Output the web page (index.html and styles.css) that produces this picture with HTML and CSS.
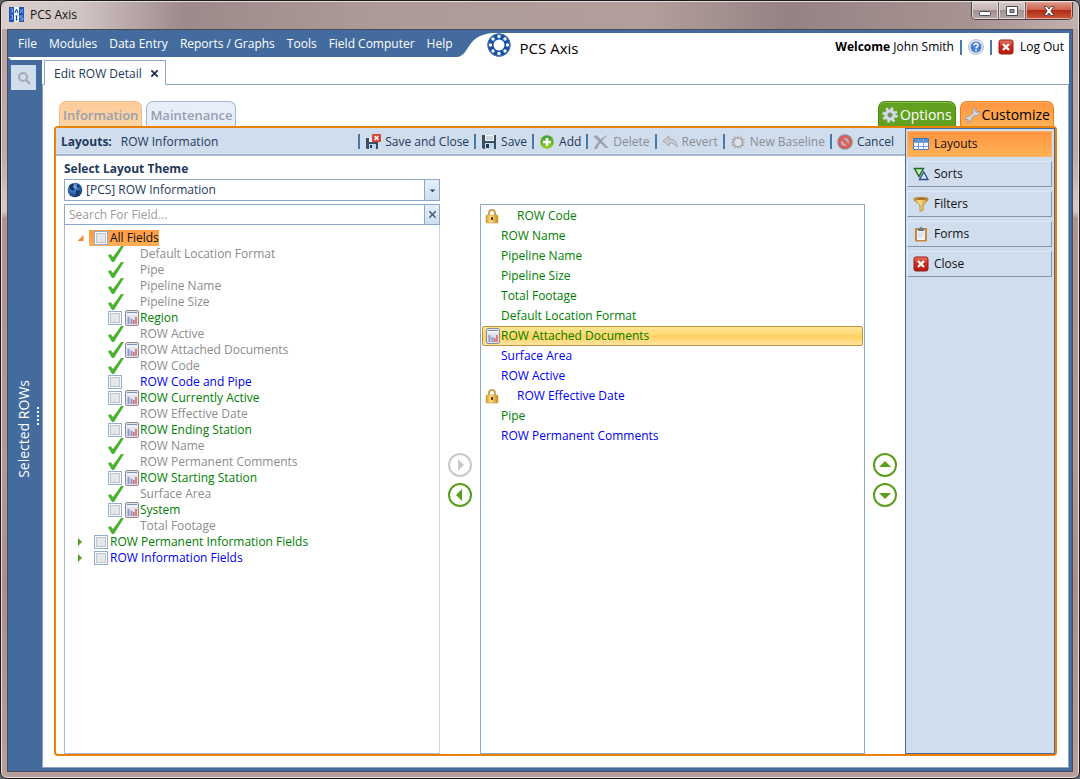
FILE: index.html
```html
<!DOCTYPE html>
<html lang="en">
<head>
<meta charset="utf-8">
<title>PCS Axis</title>
<link rel="stylesheet" href="styles.css">
</head>
<body>
<svg class="sprite" aria-hidden="true">
  <defs>
    <linearGradient id="g-red" x1="0" y1="0" x2="0" y2="1"><stop offset="0" stop-color="#ee7766"/><stop offset=".5" stop-color="#cc2418"/><stop offset="1" stop-color="#b81a10"/></linearGradient>
    <linearGradient id="g-gold" x1="0" y1="0" x2="1" y2="0"><stop offset="0" stop-color="#d99a28"/><stop offset=".4" stop-color="#fbe08a"/><stop offset="1" stop-color="#c98a1c"/></linearGradient>
    <radialGradient id="g-globe" cx=".4" cy=".3" r=".7"><stop offset="0" stop-color="#8db8ea"/><stop offset=".5" stop-color="#3470bc"/><stop offset="1" stop-color="#17386e"/></radialGradient>
    <linearGradient id="g-green" x1="0" y1="0" x2="0" y2="1"><stop offset="0" stop-color="#3f9c36"/><stop offset="1" stop-color="#8fd01f"/></linearGradient>
  </defs>
  <symbol id="calc" viewBox="0 0 14 16"><rect x=".5" y=".5" width="13" height="15" rx="1.5" fill="#e4e3ea" stroke="#8c8c9c"/><rect x="2" y="2" width="10" height="3" fill="#eef5fa"/><path d="M2 2.500h10" stroke="#7c90a9"/><path d="M3.500 7v7M6.500 9v5" stroke="#8b98c8" stroke-width="2"/><path d="M8.800 10v4M11 7v7" stroke="#d96868" stroke-width="1.600"/></symbol>
  <symbol id="lock" viewBox="0 0 14 16"><path d="M4 8V5a3 3 0 0 1 6 0v3" fill="none" stroke="#c9a45a" stroke-width="2"/><rect x="1" y="7" width="12" height="8" rx="1" fill="url(#g-gold)" stroke="#c79a48" stroke-width=".6"/><path d="M7 9v3" stroke="#5c3d08" stroke-width="2"/></symbol>
  <symbol id="redx" viewBox="0 0 16 16"><rect x="1" y="1" width="14" height="14" rx="2" fill="url(#g-red)" stroke="#8e2018"/><path d="M5 5l6 6M11 5l-6 6" stroke="#fff" stroke-width="2.400"/></symbol>
  <symbol id="floppy" viewBox="0 0 16 16"><path d="M1 1h14v14H2.500L1 13.500z" fill="#3d4d60"/><path d="M4 1h9v6H4z" fill="#f3f7fa"/><path d="M5 3h7M5 5h7" stroke="#a7b3c0"/><path d="M4 9h9v6H4z" fill="#b9daf0"/><path d="M5 10h3v4H5z" fill="#2b3b4d"/></symbol>
</svg>

<div class="window">
  <header class="titlebar">
    <svg class="app-icon" viewBox="0 0 15 15"><path fill="#1f56b5" d="M0 0h5v15H0zM10 0h5v15h-5z"/><path fill="#f4f8ff" d="M5 0h5v15H5z"/><path fill="none" stroke="#7fa8e4" d="M1.500 2h2v3h-2M1.500 8h2v4h-2M11 2l3 4M14 2l-3 4M14 9h-3v2h3v2h-3"/><path fill="none" stroke="#173f86" d="M6 6l1.500-4L9 6M7.500 9v4M6.500 9h2M6.500 13h2"/></svg>
    <span class="title">PCS Axis</span>
    <div class="win-buttons">
      <button class="win-btn" aria-label="Minimize"><svg viewBox="0 0 14 12"><rect x="1.500" y="6.500" width="11" height="4" rx="1" fill="#fff" stroke="#4a4c58"/></svg></button>
      <button class="win-btn" aria-label="Maximize"><svg viewBox="0 0 14 12"><path d="M1.500 1.500h11v9h-11zM5 4.500h4v3H5z" fill="#fff" fill-rule="evenodd" stroke="#4a4c58"/></svg></button>
      <button class="win-btn close" aria-label="Close window"><svg viewBox="0 0 14 12"><path d="M2 1.500h3l2 2.500 2-2.500h3L8.800 6l3.200 4.500H9L7 8l-2 2.500H2L5.200 6z" fill="#fff" stroke="#57404a" stroke-width=".9"/></svg></button>
    </div>
  </header>

  <div class="client">
    <div class="header">
      <nav class="menu">
        <a href="#">File</a><a href="#">Modules</a><a href="#">Data Entry</a><a href="#">Reports / Graphs</a><a href="#">Tools</a><a href="#">Field Computer</a><a href="#">Help</a>
      </nav>
      <svg class="swoosh" viewBox="0 0 40 24" preserveAspectRatio="none"><path d="M0 24C12 21 8 3 34 0H40V24z" fill="#fff"/></svg>
      <div class="brandbar">
        <svg class="brand-logo" viewBox="0 0 24 24"><circle cx="12" cy="12" r="8.500" fill="none" stroke="#1452a8" stroke-width="6"/><circle cx="12" cy="12" r="11.200" fill="none" stroke="#56779f"/><g fill="#fff"><circle cx="12" cy="3.500" r="1.700"/><circle cx="18" cy="6" r="1.700"/><circle cx="20.500" cy="12" r="1.700"/><circle cx="18" cy="18" r="1.700"/><circle cx="12" cy="20.500" r="1.700"/><circle cx="6" cy="18" r="1.700"/><circle cx="3.500" cy="12" r="1.700"/><circle cx="6" cy="6" r="1.700"/></g></svg>
        <span class="brand">PCS Axis</span>
        <div class="user">
          <span><b>Welcome</b> John Smith</span>
          <i class="sep"></i>
          <button class="plain" aria-label="Help"><svg class="i16" viewBox="0 0 16 16"><circle cx="8" cy="8" r="7.500" fill="#dfe3ec" stroke="#b9bec9"/><circle cx="8" cy="8" r="5.500" fill="#4a7fd4"/><path d="M6 6.500c0-2.600 4-2.600 4 0C10 8 8 7.800 8 9.500M8 10.600v1.600" fill="none" stroke="#fff" stroke-width="1.500"/></svg></button>
          <i class="sep"></i>
          <button class="plain"><svg class="i16"><use href="#redx"/></svg>Log Out</button>
        </div>
      </div>
    </div>

    <div class="main">
      <aside class="rail">
        <button class="rail-search" aria-label="Search"><svg viewBox="0 0 14 14"><circle cx="6" cy="6" r="4" fill="none" stroke="#a3a9b1" stroke-width="2"/><path d="M9 9l4 4" stroke="#a3a9b1" stroke-width="2.400"/></svg></button>
        <div class="rail-label"><span>Selected ROWs</span><i class="grip"></i></div>
      </aside>

      <div class="workspace">
        <div class="doctabs"><div class="doctab">Edit ROW Detail<button class="plain" aria-label="Close tab"><svg viewBox="0 0 10 10"><path d="M1.500 1.500l7 7M8.500 1.500l-7 7" stroke="#1f3354" stroke-width="2"/></svg></button></div></div>
        <div class="page">
          <div class="tabs">
            <button class="tab info">Information</button>
            <button class="tab maint">Maintenance</button>
            <button class="tab options"><svg class="i16" viewBox="0 0 16 16"><circle cx="8" cy="8" r="6.300" fill="none" stroke="#d3dbe8" stroke-width="3" stroke-dasharray="2.480 2.470"/><circle cx="8" cy="8" r="4" fill="none" stroke="#d3dbe8" stroke-width="3.400"/><circle cx="8" cy="8" r="2.200" fill="none" stroke="#8b96ad"/></svg>Options</button>
            <button class="tab custom"><svg class="i16" viewBox="0 0 16 16"><path d="M1 12.500C1 10 4 9 5.500 9L9 6C8 3 10 .5 13 1l-2 2.500 1.500 2L15.500 4C16 7 13.500 9 10.500 8.500L7.500 11c.5 2-1 4.500-4 4.500l1.300-2L3.500 12z" fill="#d5d9e0" stroke="#8d8f96" stroke-width=".8"/></svg>Customize</button>
          </div>

          <div class="panel">
            <section class="editor">
              <div class="toolbar">
                <h1><b>Layouts:</b><span>ROW Information</span></h1>
                <i class="sep"></i>
                <button class="tool"><svg class="i16" viewBox="0 0 16 16"><path d="M1 4h12v11H2l-1-1z" fill="#3d4d60"/><path d="M4 4h6v4H4z" fill="#f3f7fa"/><path d="M4 10h7v5H4z" fill="#b9daf0"/><path d="M5 11h2v3H5z" fill="#2b3b4d"/><rect x="7" y="0" width="9" height="8" rx="1" fill="#d8423a"/><path d="M9.500 2l4 4M13.500 2l-4 4" stroke="#fff" stroke-width="1.500"/></svg>Save and Close</button>
                <i class="sep"></i>
                <button class="tool"><svg class="i16"><use href="#floppy"/></svg>Save</button>
                <i class="sep"></i>
                <button class="tool"><svg class="i16" viewBox="0 0 16 16"><circle cx="8" cy="8" r="6.800" fill="url(#g-green)"/><path d="M8 4v8M4 8h8" stroke="#fff" stroke-width="2.600"/></svg>Add</button>
                <i class="sep"></i>
                <button class="tool" disabled><svg class="i16" viewBox="0 0 16 16"><path d="M.5 2.500L3.500 1 15.500 14h-3zM15.500 1C10 5 6 9.500 4 15H1C4 8.500 9 3 15.500 1z" fill="#9da2aa"/></svg>Delete</button>
                <i class="sep"></i>
                <button class="tool" disabled><svg class="i16" viewBox="0 0 16 16"><path d="M1 7l6-5v3c5 0 8 2.500 8 8-2-3-4-4-8-4v3z" fill="#c9cdd2" stroke="#9a9fa6" stroke-width=".8"/></svg>Revert</button>
                <i class="sep"></i>
                <button class="tool" disabled><svg class="i16" viewBox="0 0 16 16"><path d="M8 1l1.300 3L12 2l-.1 3.100 3.100-.2L12.700 7.300 15.500 8.500l-2.900 1 2 2.500-3.200-.1.200 3L9.200 12.800 8 15.500l-1.200-2.700L4.400 15l.1-3.100-3.100.1 2-2.500-2.900-1 2.800-1.200L1 4.900l3.100.2L4 2l2.700 2z" fill="#a6a9ae"/><circle cx="8" cy="8.400" r="3.600" fill="#dfe3e8"/></svg>New Baseline</button>
                <i class="sep"></i>
                <button class="tool"><svg class="i16" viewBox="0 0 16 16"><circle cx="8" cy="8" r="7.800" fill="#8f8f95"/><circle cx="8" cy="8" r="5.300" fill="#b4b4ba" stroke="#e05a58" stroke-width="2.600"/><path d="M4 4l8 8" stroke="#e05a58" stroke-width="2.600"/></svg>Cancel</button>
              </div>

              <div class="columns">
                <div class="fields">
                  <label class="field-title" for="theme">Select Layout Theme</label>
                  <div class="combo">
                    <svg class="i16" viewBox="0 0 16 16"><circle cx="8" cy="8" r="7.300" fill="url(#g-globe)"/><path d="M2 4c2-2 4-2.500 5-2L6 5l2 2-2 2-3-2zM9 8l4 1-2 4-2 1zM10 2l3 2-1 2-2-1z" fill="#173661"/></svg>
                    <select id="theme"><option>[PCS] ROW Information</option></select>
                    <span class="side-btn"><svg viewBox="0 0 8 8"><path d="M1.500 3h5L4 5.500z" fill="#2d3f5e"/></svg></span>
                  </div>
                  <div class="combo search">
                    <input type="text" placeholder="Search For Field..." aria-label="Search for field">
                    <button class="side-btn" aria-label="Clear search"><svg viewBox="0 0 10 10"><path d="M1.500 1.500l7 7M8.500 1.500l-7 7" stroke="#46597a" stroke-width="1.600"/></svg></button>
                  </div>
                  <ul class="tree">
                    <li class="root"><svg class="twist" viewBox="0 0 8 8"><path d="M7.500 1v6h-6z" fill="#f0882c"/></svg><label class="selected"><input type="checkbox">All Fields</label></li>
                    <li><label class="used"><input type="checkbox" checked><i></i>Default Location Format</label></li>
                    <li><label class="used"><input type="checkbox" checked><i></i>Pipe</label></li>
                    <li><label class="used"><input type="checkbox" checked><i></i>Pipeline Name</label></li>
                    <li><label class="used"><input type="checkbox" checked><i></i>Pipeline Size</label></li>
                    <li><label class="green"><input type="checkbox"><svg class="calc"><use href="#calc"/></svg>Region</label></li>
                    <li><label class="used"><input type="checkbox" checked><i></i>ROW Active</label></li>
                    <li><label class="used"><input type="checkbox" checked><svg class="calc"><use href="#calc"/></svg>ROW Attached Documents</label></li>
                    <li><label class="used"><input type="checkbox" checked><i></i>ROW Code</label></li>
                    <li><label class="blue"><input type="checkbox"><i></i>ROW Code and Pipe</label></li>
                    <li><label class="green"><input type="checkbox"><svg class="calc"><use href="#calc"/></svg>ROW Currently Active</label></li>
                    <li><label class="used"><input type="checkbox" checked><i></i>ROW Effective Date</label></li>
                    <li><label class="green"><input type="checkbox"><svg class="calc"><use href="#calc"/></svg>ROW Ending Station</label></li>
                    <li><label class="used"><input type="checkbox" checked><i></i>ROW Name</label></li>
                    <li><label class="used"><input type="checkbox" checked><i></i>ROW Permanent Comments</label></li>
                    <li><label class="green"><input type="checkbox"><svg class="calc"><use href="#calc"/></svg>ROW Starting Station</label></li>
                    <li><label class="used"><input type="checkbox" checked><i></i>Surface Area</label></li>
                    <li><label class="green"><input type="checkbox"><svg class="calc"><use href="#calc"/></svg>System</label></li>
                    <li><label class="used"><input type="checkbox" checked><i></i>Total Footage</label></li>
                    <li class="root"><svg class="twist" viewBox="0 0 8 8"><path d="M2 0v8l4-4z" fill="#5a9e1c"/></svg><label class="green"><input type="checkbox">ROW Permanent Information Fields</label></li>
                    <li class="root"><svg class="twist" viewBox="0 0 8 8"><path d="M2 0v8l4-4z" fill="#5a9e1c"/></svg><label class="blue"><input type="checkbox">ROW Information Fields</label></li>
                  </ul>
                </div>

                <div class="arrows">
                  <button class="arrow" disabled aria-label="Add field"><svg viewBox="0 0 24 24"><circle cx="12" cy="12" r="11"/><path d="M10 6v12l6-6z"/></svg></button>
                  <button class="arrow" aria-label="Remove field"><svg viewBox="0 0 24 24"><circle cx="12" cy="12" r="11"/><path d="M14 6v12l-6-6z"/></svg></button>
                </div>

                <ul class="chosen">
                  <li class="green locked"><svg><use href="#lock"/></svg>ROW Code</li>
                  <li class="green">ROW Name</li>
                  <li class="green">Pipeline Name</li>
                  <li class="green">Pipeline Size</li>
                  <li class="green">Total Footage</li>
                  <li class="green">Default Location Format</li>
                  <li class="green current"><svg><use href="#calc"/></svg>ROW Attached Documents</li>
                  <li class="blue">Surface Area</li>
                  <li class="blue">ROW Active</li>
                  <li class="blue locked"><svg><use href="#lock"/></svg>ROW Effective Date</li>
                  <li class="green">Pipe</li>
                  <li class="blue">ROW Permanent Comments</li>
                </ul>

                <div class="arrows">
                  <button class="arrow" aria-label="Move up"><svg viewBox="0 0 24 24"><circle cx="12" cy="12" r="11"/><path d="M6 14h12l-6-6z"/></svg></button>
                  <button class="arrow" aria-label="Move down"><svg viewBox="0 0 24 24"><circle cx="12" cy="12" r="11"/><path d="M6 10h12l-6 6z"/></svg></button>
                </div>
              </div>
            </section>

            <nav class="side">
              <button class="side-item active"><svg class="i16" viewBox="0 0 16 16"><path d="M.5 2.500h15v11H.5z" fill="#fff" stroke="#4a78b8"/><path d="M1 3h14v3H1z" fill="#5b8fd6"/><path d="M.5 6.500h15M.5 10.500h15M5.500 3v11M10.500 3v11" stroke="#7ea3d4"/></svg>Layouts</button>
              <button class="side-item"><svg class="i16" viewBox="0 0 16 16"><path d="M1.500 2.500h9L6 10.500z" fill="#c5e8b4" stroke="#1f6d25" stroke-width="1.500"/><path d="M6.500 13.500h8.500L10.800 6z" fill="#d5e4f8" stroke="#2b4d8c" stroke-width="1.300"/></svg>Sorts</button>
              <button class="side-item"><svg class="i16" viewBox="0 0 16 16"><path d="M1 2.500C3 1 13 1 15 2.500V4l-5 5v5l-3 1.500V9L1 4z" fill="url(#g-gold)" stroke="#bb7b1d" stroke-width=".8"/><ellipse cx="8" cy="2.800" rx="6" ry="1.200" fill="#a8752c"/></svg>Filters</button>
              <button class="side-item"><svg class="i16" viewBox="0 0 16 16"><rect x="2" y="2" width="12" height="13.500" rx="1" fill="#c9863a"/><path d="M4 4h8v10H4z" fill="#f3f7fb"/><path d="M5 7h6M5 9h6M5 11h4" stroke="#b7c7da" stroke-width=".8"/><path d="M5 2.500h1.500L8 .5l1.500 2H11V5H5z" fill="#64788f"/></svg>Forms</button>
              <button class="side-item"><svg class="i16"><use href="#redx"/></svg>Close</button>
            </nav>
          </div>
        </div>
      </div>
    </div>
  </div>
</div>
</body>
</html>
```
FILE: styles.css
```css
* { box-sizing: border-box; }

body {
  margin: 0;
  background: #5d6670;
  font: 12px/16px "Open Sans", "Noto Sans", sans-serif;
  color: #1e395b;
}

button, input, select { font: inherit; color: inherit; margin: 0; }
button { padding: 0; border: 0; background: none; cursor: pointer; white-space: nowrap; }
a { color: inherit; text-decoration: none; }
ul { list-style: none; margin: 0; padding: 0; }
svg { display: block; flex: none; }

.sprite { position: absolute; width: 0; height: 0; }
.i16 { width: 16px; height: 16px; }
.green { color: #008000; }
.blue { color: #0000f0; }
.sep { width: 2px; height: 15px; background: #4a78ad; flex: none; }

/* Window frame */
.window {
  min-height: 100vh;
  display: flex;
  flex-direction: column;
  padding: 0 6px 6px 6px;
  border: 1px solid #1d1a1c;
  border-radius: 7px;
  background: linear-gradient(#b9a5a3, #c0aaa8 20%, #d8cac8 27%, #ae9390 28%, #b39a97 60%, #a98e8b 75%, #b8a09d);
  box-shadow: inset 0 0 0 1px #e6dcdb;
}

.titlebar {
  display: flex;
  height: 27px;
  margin: 1px -5px 0;
  border-radius: 6px 6px 0 0;
  padding: 0 0 0 7px;
  background: linear-gradient(90deg, #d9cfcd, #d2c6c4 7%, #9d8a8a 17%, #ad9b99 35%, #b29f9c 60%, #958384 73%, #a79391 90%, #c2b1af);
}
.app-icon { width: 15px; height: 15px; margin-top: 5px; }
.title { flex: 1; margin: 5px 0 0 6px; color: #111; }
.win-buttons {
  display: flex;
  height: 18px;
  margin-right: 5px;
  border: 1px solid #4c4245;
  border-top: 0;
  border-radius: 0 0 5px 5px;
  overflow: hidden;
}
.win-btn {
  width: 27px;
  display: grid;
  place-items: center;
  border-right: 1px solid #6a5e60;
  background: linear-gradient(#d5cac9, #c4b6b5 48%, #a39292 50%, #b7a8a7);
  box-shadow: inset 0 0 0 1px #e2d9d8;
}
.win-btn svg { width: 14px; height: 12px; }
.win-btn.close {
  width: 46px;
  border: 0;
  background: linear-gradient(#dc9a8c, #cd604b 48%, #b02a14 50%, #cf5a3a);
  box-shadow: inset 0 0 0 1px #e8a697;
}

.client {
  flex: 1;
  display: flex;
  flex-direction: column;
  padding: 0 3px 3px 0;
  border: 1px solid #4b4a55;
  background: #436b9e;
}

/* Header */
.header { display: flex; height: 27px; padding-top: 3px; }
.menu { display: flex; gap: 12px; align-items: center; padding: 0 5px 2px 10px; color: #fff; white-space: nowrap; }
.swoosh { width: 40px; height: 24px; }
.brandbar { flex: 1; display: flex; align-items: center; background: #fff; }
.brand-logo { width: 24px; height: 24px; margin-left: -11px; }
.brand { margin-left: 9px; font-size: 15px; line-height: 20px; color: #000; padding-top: 5px; }
.user { margin-left: auto; display: flex; align-items: center; gap: 6px; padding: 4px 5px 0 0; color: #000; }
.plain { display: flex; align-items: center; gap: 6px; }

/* Body below the header */
.main { flex: 1; display: flex; background: #fff; }
.rail {
  width: 34px;
  display: flex;
  flex-direction: column;
  border-left: 3px solid #436b9e;
  border-top: 3px solid #fff;
  background: #436b9e;
  flex: none;
}
.rail-search { width: 25px; height: 25px; margin-top: 5px; background: #d0dded; display: grid; place-items: center; }
.rail-search svg { width: 14px; height: 14px; }
.rail-label { flex: 1; display: flex; align-items: center; color: #fff; font-size: 14px; line-height: 18px; }
.rail-label span { writing-mode: vertical-rl; transform: rotate(180deg); margin: 0 4px; }
.grip { height: 18px; border-left: 2px dotted #fff; margin-bottom: 26px; }

.workspace { flex: 1; display: flex; flex-direction: column; padding-top: 3px; min-width: 0; }
.doctabs { display: flex; height: 25px; padding-left: 2px; border-bottom: 1px solid #8ba3c4; }
.doctab {
  display: flex;
  align-items: center;
  gap: 8px;
  height: 25px;
  padding: 2px 6px 0 9px;
  border: 1px solid #8ba3c4;
  border-bottom-color: #fff;
  background: #fff;
}
.doctab svg { width: 9px; height: 9px; }
.page {
  flex: 1;
  display: flex;
  flex-direction: column;
  padding: 16px 11px 11px 11px;
  border: solid #8ba3c4;
  border-width: 0 1px 1px;
}

.tabs { display: flex; align-items: flex-end; gap: 4px; padding: 0 3px 0 5px; height: 25px; }
.tab {
  display: flex;
  align-items: center;
  justify-content: center;
  height: 25px;
  padding: 2px 3px 0;
  border: 1px solid;
  border-bottom: 0;
  border-radius: 7px 7px 0 0;
  font-size: 14px;
  line-height: 20px;
}
.tab.info { background: linear-gradient(#fdcb9c, #fed5a3); border-color: #f6bd85; color: #95a0b0; font-size: 13px; font-weight: 600; }
.tab.maint { background: #e8eef7; border-color: #a2b7d4; color: #95a0b0; font-size: 13px; font-weight: 600; }
.tab.options { margin-left: auto; gap: 2px; background: #62a01f; border-color: #4b8a10; color: #fff; box-shadow: inset 0 1px #8cbf50; }
.tab.custom { gap: 2px; background: linear-gradient(#ff9640, #ffb056); border-color: #e87f10; color: #000; box-shadow: inset 0 1px #ffb374; }

.panel { flex: 1; display: flex; border: 2px solid #ec8108; border-radius: 4px; }
.editor { flex: 1; display: flex; flex-direction: column; min-width: 0; }
.toolbar {
  display: flex;
  align-items: center;
  gap: 5px;
  height: 28px;
  padding: 1px 11px 0 5px;
  background: #d0dded;
  border-bottom: 2px solid #a5b9d2;
}
.toolbar h1 { display: flex; gap: 9px; flex: 1; margin: 0; font-size: 12px; line-height: 16px; font-weight: 400; white-space: nowrap; }
.tool { display: flex; align-items: center; gap: 4px; }
.tool:disabled { color: #8a8d92; cursor: default; }

.columns { flex: 1; display: flex; padding: 0 0 0 8px; }
.fields { flex: 378 1 0; min-width: 0; display: flex; flex-direction: column; }
.field-title { font-weight: 700; padding: 5px 0 2px; }
.combo { display: flex; align-items: stretch; height: 22px; border: 1px solid #8ba9cd; }
.combo > svg { margin: 2px; }
.combo select, .combo input {
  flex: 1;
  min-width: 0;
  appearance: none;
  border: 0;
  padding: 0 1px;
  outline: 0;
  background: #fff;
}
.combo.search { height: 21px; margin-top: 3px; }
.combo.search input { padding: 0 4px; }
.combo input::placeholder { color: #9c9c9c; opacity: 1; }
.side-btn { width: 15px; display: grid; place-items: center; border-left: 1px solid #8ba9cd; background: linear-gradient(#e6eff9, #cddff1); }
.side-btn svg { width: 9px; height: 9px; }

/* Field tree */
.tree { flex: 1; border: 1px solid #a3b9d6; border-top: 0; border-right-color: #c8d6e8; padding: 5px 0 0 10px; }
.tree li { display: flex; height: 16px; padding-left: 33px; white-space: nowrap; }
.tree li.root { padding-left: 0; }
.tree label { display: flex; align-items: center; height: 16px; }
.tree .root label { padding-left: 5px; margin-left: 5px; }
.tree label i { width: 15px; }
.twist { width: 8px; height: 8px; margin: 4px 0 0 1px; }
.tree .root input { margin-right: 2px; }
.tree label.selected { background: linear-gradient(#ff9a44, #ffae55); color: #111; }
.calc { width: 14px; height: 16px; margin-right: 1px; }
.used { color: #8c8c8c; }
.tree input {
  appearance: none;
  width: 14px;
  height: 14px;
  margin-right: 3px;
  border: 1px solid #93aed0;
  background: #e4e6e8;
  box-shadow: inset 0 0 0 1px #f8fafc, inset 0 0 0 2px #bcc5d0;
}
.tree input:checked {
  width: 17px;
  height: 16px;
  margin-right: 0;
  border: 0;
  box-shadow: none;
  background: url("data:image/svg+xml,%3Csvg xmlns='http://www.w3.org/2000/svg' viewBox='0 0 17 16'%3E%3Cpath d='M0 9.500l2.500-1.500L5 11 13 0h3L6 16H4z' fill='%234bb134'/%3E%3C/svg%3E") center / 100% 100% no-repeat;
}

/* Arrow buttons */
.arrows { display: flex; flex-direction: column; justify-content: center; gap: 6px; padding-top: 50px; flex: none; width: 40px; align-items: center; }
.arrow { height: 24px; }
.arrow svg { width: 24px; height: 24px; fill: #5a9e1c; }
.arrow circle { fill: #fff; stroke: #5a9e1c; stroke-width: 2; }
.arrow:disabled svg { fill: #c9c9c9; }
.arrow:disabled circle { stroke: #c9c9c9; }

/* Chosen fields */
.chosen { flex: 383 1 0; min-width: 0; margin-top: 48px; padding: 1px; border: 1px solid #8ba9cd; }
.chosen li { display: flex; align-items: center; height: 20px; padding-left: 19px; white-space: nowrap; }
.chosen li.locked { padding-left: 3px; }
.chosen svg { width: 14px; height: 16px; }
.chosen .locked svg { margin-right: 18px; }
.chosen li.current {
  padding-left: 3px;
  border: 1px solid #c0943c;
  border-radius: 2px;
  background: linear-gradient(#ffe595, #ffdb77 40%, #ffcf5d 50%, #ffe5a0);
}
.chosen .current svg { margin-right: 1px; }

/* Side menu */
.side { width: 150px; flex: none; display: flex; flex-direction: column; gap: 4px; padding: 2px 2px 0 1px; background: #d0dded; border: 1px solid #436b9e; }
.side-item {
  display: flex;
  align-items: center;
  gap: 5px;
  height: 26px;
  padding-left: 5px;
  border: 1px solid #dfeaf7;
  border-right-color: #8794a6;
  border-bottom-color: #8794a6;
  color: #111;
}
.side-item.active { border-color: #ffb067; background: linear-gradient(#ff9440, #ffb257); }
```
